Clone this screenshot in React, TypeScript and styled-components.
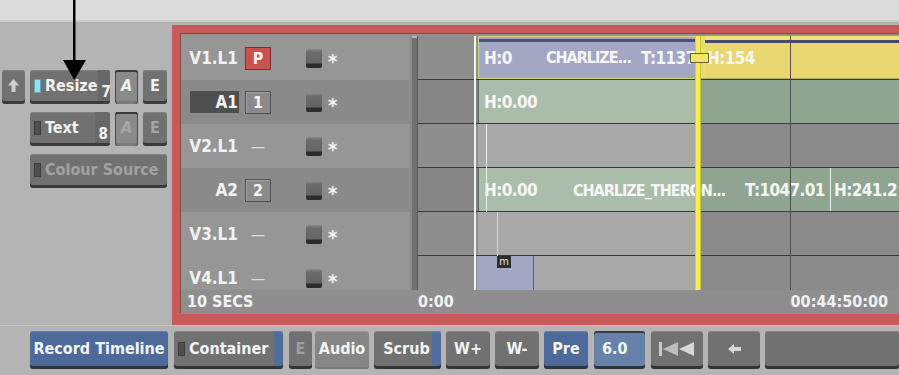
import React from 'react'
import styled, { createGlobalStyle } from 'styled-components'

const FONT = `'DejaVu Sans Condensed', 'DejaVu Sans', sans-serif`

const GlobalStyle = createGlobalStyle`
	html, body {
		margin: 0;
		padding: 0;
		background: #b4b4b4;
	}
	body {
		font-family: ${FONT};
	}
`

const Screen = styled.div`
	position: relative;
	width: 899px;
	height: 375px;
	overflow: hidden;
	background: #b4b4b4;
	display: flex;
	flex-direction: column;
	font-family: ${FONT};
	font-weight: bold;
	color: #f2f2f2;
`

const TopStrip = styled.div`
	height: 20px;
	flex: none;
	background: #dcdcdc;
	border-bottom: 2px solid #cacaca;
`

const Workspace = styled.div`
	display: flex;
	height: 303px;
	flex: none;
	padding-top: 3px;
	box-sizing: border-box;
`

/* ---------- left controls ---------- */

const Controls = styled.div`
	width: 172px;
	flex: none;
	box-sizing: border-box;
	padding: 45px 0 0 2px;
	display: grid;
	grid-template-columns: 23px 80px 23px 24px;
	grid-auto-rows: 34px;
	column-gap: 5px;
	row-gap: 8px;
	align-content: start;
`

const CtrlButton = styled.div<{ $span?: number; $col?: number; $dim?: boolean; $center?: boolean }>`
	grid-column: ${(p) => (p.$col ? `${p.$col} / span ${p.$span ?? 1}` : 'auto')};
	box-sizing: border-box;
	height: 34px;
	border-radius: 3px;
	background: #717171;
	box-shadow: inset 0 -3px 0 #3b3b3b, inset 0 1px 0 #848484;
	display: flex;
	align-items: center;
	justify-content: ${(p) => (p.$center ? 'center' : 'flex-start')};
	padding: 0 ${(p) => (p.$center ? 0 : 4)}px 3px;
	font-size: 16px;
	color: ${(p) => (p.$dim ? '#a2a2a2' : '#f2f2f2')};
	white-space: nowrap;
	overflow: hidden;
`

const Indicator = styled.span<{ $on?: boolean }>`
	flex: none;
	width: 7px;
	height: 14px;
	margin-right: 4px;
	box-sizing: border-box;
	background: ${(p) => (p.$on ? '#8fe0f8' : '#4f4f4f')};
	border: 1px solid ${(p) => (p.$on ? '#5aa7c0' : '#3e3e3e')};
`

const Digit = styled.span`
	margin-left: auto;
	align-self: stretch;
	display: flex;
	align-items: flex-end;
	padding: 0 2px 0 4px;
	margin-right: -4px;
	background: #686868;
	font-size: 15px;
`

const LetterButton = styled.div<{ $pressed?: boolean; $dim?: boolean }>`
	box-sizing: border-box;
	height: 34px;
	border-radius: 3px;
	display: flex;
	align-items: center;
	justify-content: center;
	padding-bottom: 3px;
	font-size: 16px;
	background: ${(p) => (p.$pressed ? '#8a8a8a' : '#717171')};
	box-shadow: ${(p) =>
		p.$pressed
			? 'inset 0 2px 0 #3a3a3a, inset 1px 0 0 #4a4a4a, inset -1px 0 0 #4a4a4a, inset 0 -3px 0 #7a7a7a'
			: 'inset 0 -3px 0 #3b3b3b, inset 0 1px 0 #848484'};
	color: ${(p) => (p.$dim ? '#a6a6a6' : '#f2f2f2')};
	font-style: ${(p) => (p.$pressed ? 'italic' : 'normal')};
`

/* ---------- timeline panel ---------- */

const Panel = styled.div`
	flex: 1;
	box-sizing: border-box;
	height: 300px;
	background: #c65c59;
	padding: 9px 0 11px 9px;
	display: flex;
`

const PanelInner = styled.div`
	flex: 1;
	display: flex;
	flex-direction: column;
	background: #929292;
	box-shadow: -1px -1px 0 #8c4444;
	padding-top: 2px;
	overflow: hidden;
`

const Tracks = styled.div`
	display: flex;
	height: 254px;
	overflow: hidden;
`

const Headers = styled.div`
	width: 229px;
	flex: none;
	display: flex;
	flex-direction: column;
`

const HeaderRow = styled.div<{ $audio?: boolean }>`
	height: 44px;
	flex: none;
	display: flex;
	align-items: center;
	padding-left: 9px;
	background: ${(p) => (p.$audio ? '#8a8a8a' : '#969696')};
	font-size: 17px;
`

const TrackName = styled.span<{ $boxed?: boolean }>`
	width: 49px;
	height: 22px;
	box-sizing: border-box;
	display: flex;
	align-items: center;
	justify-content: flex-end;
	padding-right: 1px;
	background: ${(p) => (p.$boxed ? '#4f4f4f' : 'transparent')};
`

const Badge = styled.span<{ $tone?: 'red' | 'box' | 'none' }>`
	width: 26px;
	height: 23px;
	margin-left: 6px;
	box-sizing: border-box;
	display: flex;
	align-items: center;
	justify-content: center;
	font-size: 16px;
	font-weight: ${(p) => (p.$tone === 'none' ? 'normal' : 'bold')};
	color: ${(p) => (p.$tone === 'none' ? '#dcdcdc' : '#f4f4f4')};
	background: ${(p) => (p.$tone === 'red' ? '#c9514f' : 'transparent')};
	border: 1px solid
		${(p) =>
			p.$tone === 'red' ? '#7a2e2e' : p.$tone === 'box' ? '#505050' : 'transparent'};
	box-shadow: ${(p) => (p.$tone === 'box' ? 'inset 1px 1px 0 #a0a0a0' : 'none')};
`

const Toggle = styled.span`
	width: 16px;
	height: 19px;
	margin-left: 35px;
	box-sizing: border-box;
	border-radius: 2px;
	background: linear-gradient(#8a8a8a 0, #6c6c6c 3px, #646464 14px, #2c2c2c 15px);
`

const Star = styled.span`
	margin-left: 6px;
	font-size: 20px;
	line-height: 18px;
	height: 16px;
	padding-top: 4px;
	overflow: visible;
	color: #f4f4f4;
`

const ScrollBar = styled.div`
	width: 8px;
	flex: none;
	background: #707070;
	box-shadow: inset 2px 0 0 #8a8a8a, inset -1px 0 0 #5a5a5a, inset 0 2px 0 #b8b8b8;
`

const Lanes = styled.div`
	position: relative;
	flex: 1;
	display: flex;
	flex-direction: column;
`

const LaneRow = styled.div<{ $audio?: boolean }>`
	height: 44px;
	flex: none;
	box-sizing: border-box;
	display: flex;
	padding-left: 60px;
	border-bottom: 1px solid #3a3a3a;
	background: linear-gradient(
		to right,
		${(p) => (p.$audio ? '#868686' : '#8e8e8e')} 0 60px,
		#a9a9a9 60px 279px,
		#8b8b8b 279px
	);
`

type Tone = 'blue' | 'yellow' | 'green'

const Clip = styled.div<{ $tone: Tone; $w?: number; $split?: number }>`
	box-sizing: border-box;
	height: 43px;
	${(p) => (p.$w ? `width: ${p.$w}px; flex: none;` : 'flex: 1;')}
	display: flex;
	align-items: center;
	overflow: hidden;
	white-space: nowrap;
	font-size: 17px;
	letter-spacing: -0.6px;
	color: #f6f6f6;
	padding-left: ${(p) => (p.$tone === 'yellow' ? 9 : 5)}px;
	background: ${(p) =>
		p.$tone === 'blue'
			? 'linear-gradient(#e0d884 0 1px, #a3a7c4 1px 3px, #4c5272 3px 6px, #a3a7c4 6px)'
			: p.$tone === 'yellow'
			? 'linear-gradient(to right, #eddc72 0 7px, transparent 7px), linear-gradient(#f1e57a 0 4px, #454c68 4px 7px, #e9d872 7px)'
			: `linear-gradient(to right, #aabcaa 0 ${p.$split}px, #8fa591 ${p.$split}px)`};
	border-bottom: ${(p) =>
		p.$tone === 'green' ? 'none' : `1px solid ${p.$tone === 'blue' ? '#d8d07c' : '#b8a850'}`};
	border-left: 1px solid ${(p) => (p.$tone === 'blue' ? '#d4cf8c' : '#5b6a5c')};
`

const SmallClip = styled.div`
	width: 56px;
	flex: none;
	height: 44px;
	background: #a3a7c4;
	border-right: 1px solid #5a5e78;
	display: flex;
	justify-content: center;
	margin-left: -1px;
`

const ClipMark = styled.span`
	height: 12px;
	padding: 0 2px;
	margin-left: -2px;
	background: #2c2c2c;
	color: #e6e6e6;
	font-size: 11px;
	line-height: 11px;
	font-weight: normal;
`

const ClipText = styled.span<{ $w?: number; $tight?: boolean }>`
	flex: none;
	${(p) => (p.$w ? `width: ${p.$w}px;` : '')}
	padding-top: 1px;
	${(p) => (p.$tight ? 'font-size: 16px; letter-spacing: -1px;' : '')}
`

const Cut = styled.span`
	width: 1px;
	height: 43px;
	flex: none;
	background: #f0f0f0;
	margin-right: 3px;
`

const VLine = styled.div<{ $x: number; $top: number; $h: number; $color: string; $wide?: number }>`
	position: absolute;
	left: ${(p) => p.$x}px;
	top: ${(p) => p.$top}px;
	width: ${(p) => p.$wide ?? 1}px;
	height: ${(p) => p.$h}px;
	background: ${(p) => p.$color};
	pointer-events: none;
`

const Playhead = styled.div`
	position: absolute;
	left: 277px;
	top: -4px;
	width: 6px;
	height: 258px;
	background: #f7ef4e;
	box-shadow: inset 1px 0 0 #d8cf3a, inset -1px 0 0 #c9c23a;
`

const PlayheadHandle = styled.div`
	position: absolute;
	left: 272px;
	top: 17px;
	width: 17px;
	height: 8px;
	background: #f2e766;
	border: 1px solid #6a6430;
`

const Footer = styled.div`
	height: 23px;
	flex: none;
	display: flex;
	align-items: center;
	background: #8e8e8e;
	font-size: 16px;
	padding-right: 11px;
`

const FooterCell = styled.span<{ $w?: number; $pad?: number }>`
	${(p) => (p.$w ? `width: ${p.$w}px; flex: none;` : 'flex: 1;')}
	padding-left: ${(p) => p.$pad ?? 0}px;
	box-sizing: border-box;
`

const FooterEnd = styled.span`
	margin-left: auto;
`

/* ---------- bottom toolbar ---------- */

const Toolbar = styled.div`
	flex: 1;
	display: flex;
	align-items: flex-start;
	padding: 5px 0 0 30px;
	border-top: 1px solid #c4c4c4;
`

type BtnTone = 'gray' | 'blue' | 'field' | 'flat'

const toneBg: Record<BtnTone, string> = {
	gray: '#717171',
	blue: '#4d6a9a',
	field: '#6782a9',
	flat: '#868686',
}

const ToolButton = styled.div<{
	$w?: number
	$ml?: number
	$tone?: BtnTone
	$edge?: boolean
	$dim?: boolean
	$left?: boolean
}>`
	${(p) => (p.$w ? `width: ${p.$w}px; flex: none;` : 'flex: 1;')}
	margin-left: ${(p) => p.$ml ?? 0}px;
	height: 38px;
	box-sizing: border-box;
	border-radius: 3px;
	display: flex;
	align-items: center;
	justify-content: ${(p) => (p.$left ? 'flex-start' : 'center')};
	padding: 0 ${(p) => (p.$edge ? 12 : 0)}px 3px ${(p) => (p.$left ? 4 : 0)}px;
	background: ${(p) => toneBg[p.$tone ?? 'gray']};
	box-shadow: ${(p) =>
		[
			p.$tone === 'flat' ? 'inset 0 -2px 0 #7a7a7a' : 'inset 0 -3px 0 #343434',
			p.$tone === 'field' ? 'inset 0 2px 0 #3a3a3a' : 'inset 0 1px 0 rgba(255,255,255,0.14)',
			p.$edge ? 'inset -9px 0 0 #4f6e9e' : '',
		]
			.filter(Boolean)
			.join(', ')};
	font-size: 16px;
	color: ${(p) => (p.$dim ? '#a0a0a0' : '#f4f4f4')};
	white-space: nowrap;
`

const ButtonLabel = styled.span<{ $pad: number }>`
	padding-left: ${(p) => p.$pad}px;
`

const Icon = styled.svg`
	display: block;
`

const tracks = [
	{ name: 'V1.L1', audio: false, badge: 'P', tone: 'red' as const },
	{ name: 'A1', audio: true, badge: '1', tone: 'box' as const, boxed: true },
	{ name: 'V2.L1', audio: false, badge: '—', tone: 'none' as const },
	{ name: 'A2', audio: true, badge: '2', tone: 'box' as const },
	{ name: 'V3.L1', audio: false, badge: '—', tone: 'none' as const },
	{ name: 'V4.L1', audio: false, badge: '—', tone: 'none' as const },
]

const Arrow = styled.svg`
	position: absolute;
	left: 62px;
	top: 0;
`

const App = () => {
	return (
		<Screen>
			<GlobalStyle />
			<TopStrip />
			<Workspace>
				<Controls>
					<CtrlButton $center>
						<Icon width="11" height="13" viewBox="0 0 11 13">
							<path d="M5.5 0 L11 6.5 L7.5 6.5 L7.5 13 L3.5 13 L3.5 6.5 L0 6.5 Z" fill="#cfcfcf" />
						</Icon>
					</CtrlButton>
					<CtrlButton>
						<Indicator $on />
						Resize
						<Digit>7</Digit>
					</CtrlButton>
					<LetterButton $pressed>A</LetterButton>
					<LetterButton>E</LetterButton>

					<CtrlButton $col={2}>
						<Indicator />
						Text
						<Digit>8</Digit>
					</CtrlButton>
					<LetterButton $pressed $dim>
						A
					</LetterButton>
					<LetterButton $dim>E</LetterButton>

					<CtrlButton $col={2} $span={3} $dim>
						<Indicator />
						Colour Source
					</CtrlButton>
				</Controls>

				<Panel>
					<PanelInner>
						<Tracks>
							<Headers>
								{tracks.map((t) => (
									<HeaderRow key={t.name} $audio={t.audio}>
										<TrackName $boxed={t.boxed}>{t.name}</TrackName>
										<Badge $tone={t.tone}>{t.badge}</Badge>
										<Toggle />
										<Star>*</Star>
									</HeaderRow>
								))}
							</Headers>
							<ScrollBar />
							<Lanes>
								<LaneRow>
									<Clip $tone="blue" $w={219}>
										<ClipText $w={62}>H:0</ClipText>
										<ClipText $w={95} $tight>
											CHARLIZE...
										</ClipText>
										<ClipText>T:1137</ClipText>
									</Clip>
									<Clip $tone="yellow">
										<ClipText>H:154</ClipText>
									</Clip>
								</LaneRow>
								<LaneRow $audio>
									<Clip $tone="green" $split={219}>
										<ClipText>H:0.00</ClipText>
									</Clip>
								</LaneRow>
								<LaneRow />
								<LaneRow $audio>
									<Clip $tone="green" $split={219}>
										<ClipText $w={89}>H:0.00</ClipText>
										<ClipText $w={172} $tight>
											CHARLIZE_THERON...
										</ClipText>
										<ClipText $w={85}>T:1047.01</ClipText>
										<Cut />
										<ClipText>H:241.2</ClipText>
									</Clip>
								</LaneRow>
								<LaneRow />
								<LaneRow>
									<SmallClip>
										<ClipMark>m</ClipMark>
									</SmallClip>
								</LaneRow>

								<VLine $x={56} $top={0} $h={254} $color="#f4f4f4" $wide={2} />
								<VLine $x={68} $top={88} $h={88} $color="#eeeeee" />
								<VLine $x={79} $top={176} $h={44} $color="#d6d6d6" />
								<VLine $x={372} $top={0} $h={254} $color="#505050" />
								<Playhead />
								<PlayheadHandle />
							</Lanes>
						</Tracks>
						<Footer>
							<FooterCell $w={237} $pad={6}>
								10 SECS
							</FooterCell>
							<FooterCell>0:00</FooterCell>
							<FooterEnd>00:44:50:00</FooterEnd>
						</Footer>
					</PanelInner>
				</Panel>
			</Workspace>

			<Toolbar>
				<ToolButton $w={138} $tone="blue">
					Record Timeline
				</ToolButton>
				<ToolButton $w={109} $ml={6} $edge $left>
					<Indicator />
					Container
				</ToolButton>
				<ToolButton $w={23} $ml={6} $dim>
					E
				</ToolButton>
				<ToolButton $w={54} $ml={3} $tone="flat">
					Audio
				</ToolButton>
				<ToolButton $w={67} $ml={5} $edge>
					<ButtonLabel $pad={10}>Scrub</ButtonLabel>
				</ToolButton>
				<ToolButton $w={44} $ml={5}>
					W+
				</ToolButton>
				<ToolButton $w={44} $ml={5}>
					W-
				</ToolButton>
				<ToolButton $w={44} $ml={5} $tone="blue">
					Pre
				</ToolButton>
				<ToolButton $w={51} $ml={6} $tone="field" $left>
					<ButtonLabel $pad={4}>6.0</ButtonLabel>
				</ToolButton>
				<ToolButton $w={52} $ml={6}>
					<Icon width="36" height="14" viewBox="0 0 36 14">
						<rect x="0" y="0" width="3" height="14" fill="#c8c8c8" />
						<path d="M4 7 L19 0 L19 14 Z" fill="#bdbdbd" />
						<path d="M20 7 L35 0 L35 14 Z" fill="#d6d6d6" />
					</Icon>
				</ToolButton>
				<ToolButton $w={52} $ml={5}>
					<Icon width="13" height="10" viewBox="0 0 13 10">
						<path d="M0 5 L6 0 L6 3 L13 3 L13 7 L6 7 L6 10 Z" fill="#d8d8d8" />
					</Icon>
				</ToolButton>
				<ToolButton $ml={5} />
			</Toolbar>

			<Arrow width="26" height="82" viewBox="0 0 26 82">
				<rect x="11" y="0" width="2.5" height="64" fill="#000" />
				<path d="M1 60 L24 60 L12.3 80 Z" fill="#000" />
			</Arrow>
		</Screen>
	)
}

export default App
